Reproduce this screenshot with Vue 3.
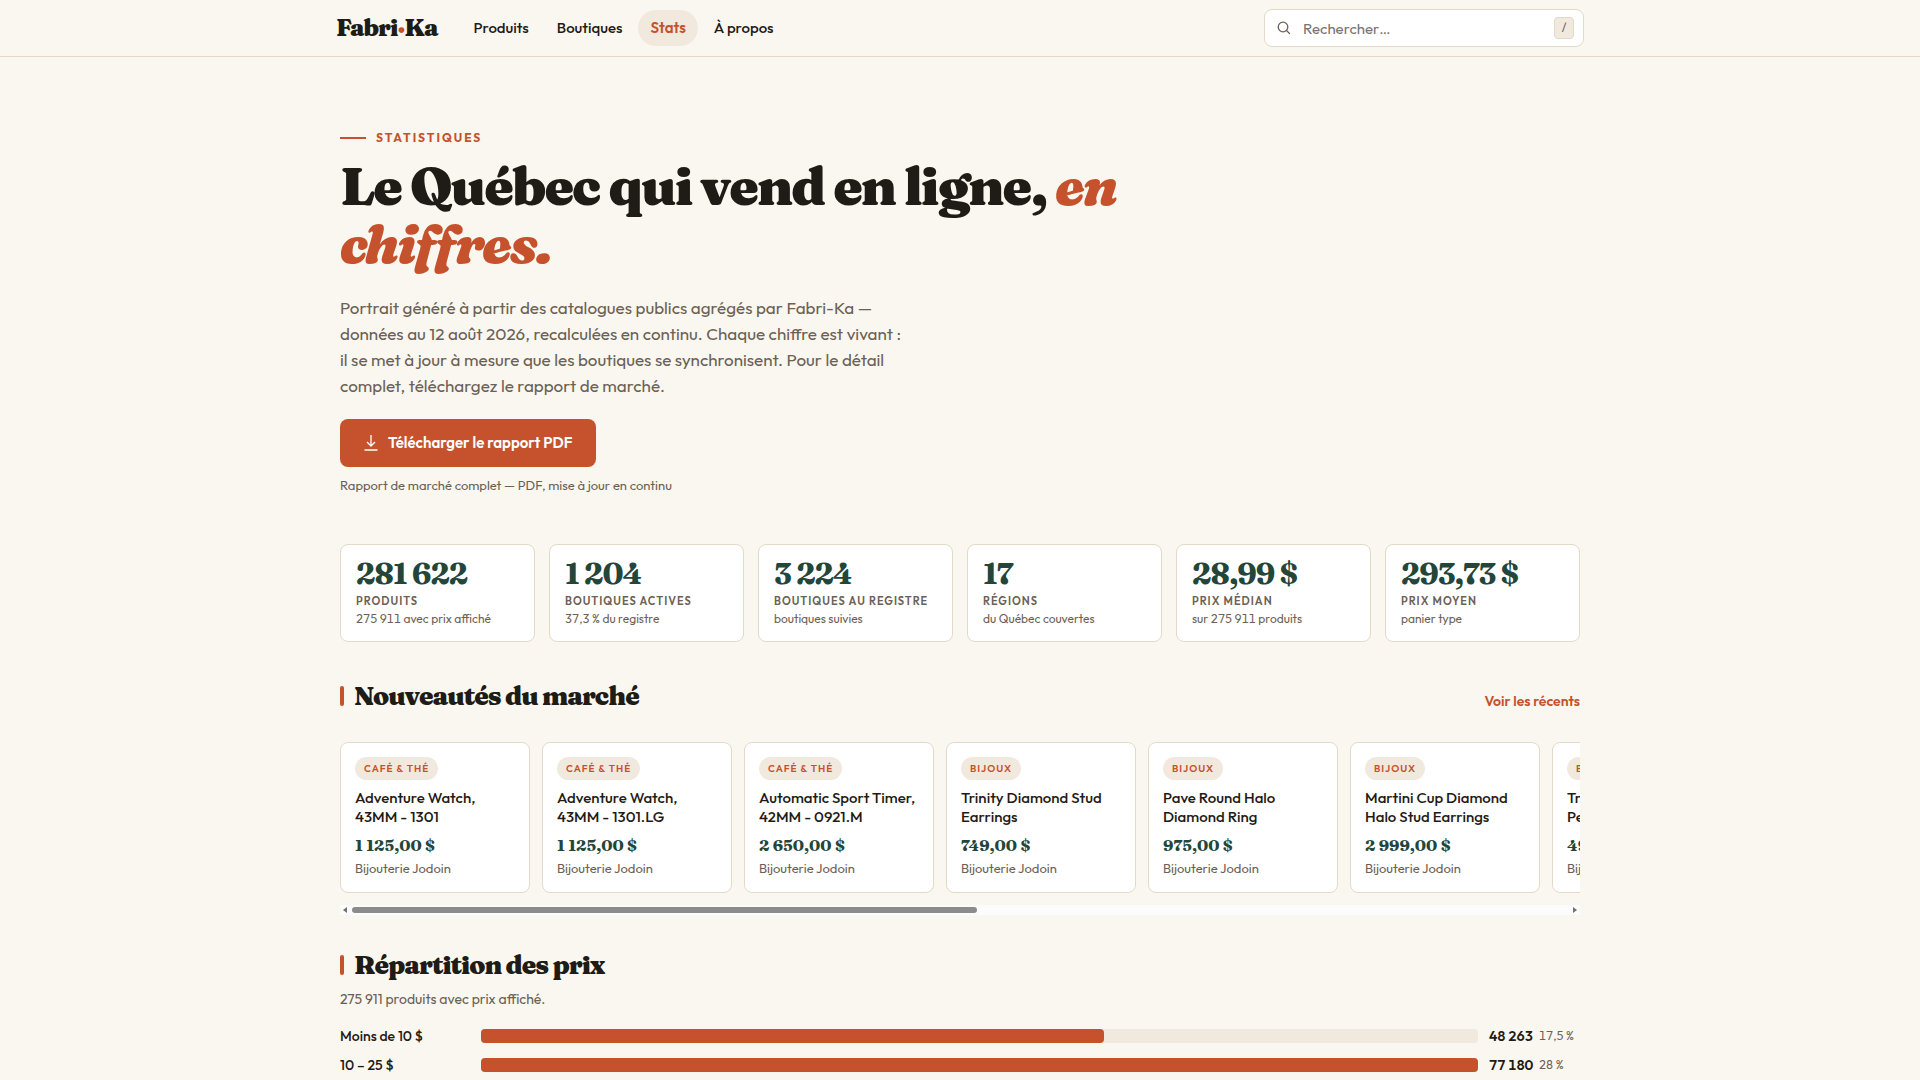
<script setup>
import { ref } from 'vue'

const query = ref('')

const links = [
  { label: 'Produits', active: false },
  { label: 'Boutiques', active: false },
  { label: 'Stats', active: true },
  { label: 'À propos', active: false },
]

const stats = [
  { value: '281 622', label: 'Produits', note: '275 911 avec prix affiché' },
  { value: '1 204', label: 'Boutiques actives', note: '37,3 % du registre' },
  { value: '3 224', label: 'Boutiques au registre', note: 'boutiques suivies' },
  { value: '17', label: 'Régions', note: 'du Québec couvertes' },
  { value: '28,99 $', label: 'Prix médian', note: 'sur 275 911 produits' },
  { value: '293,73 $', label: 'Prix moyen', note: 'panier type' },
]

const shop = 'Bijouterie Jodoin'
const products = [
  { tag: 'Café & thé', name: 'Adventure Watch, 43MM - 1301', price: '1 125,00 $' },
  { tag: 'Café & thé', name: 'Adventure Watch, 43MM - 1301.LG', price: '1 125,00 $' },
  { tag: 'Café & thé', name: 'Automatic Sport Timer, 42MM - 0921.M', price: '2 650,00 $' },
  { tag: 'Bijoux', name: 'Trinity Diamond Stud Earrings', price: '749,00 $' },
  { tag: 'Bijoux', name: 'Pave Round Halo Diamond Ring', price: '975,00 $' },
  { tag: 'Bijoux', name: 'Martini Cup Diamond Halo Stud Earrings', price: '2 999,00 $' },
  { tag: 'Bijoux', name: 'Trinity Diamond Pendant Necklace', price: '499,00 $' },
]

const prices = [
  { label: 'Moins de 10 $', count: 48263, text: '48 263', share: '17,5 %' },
  { label: '10 – 25 $', count: 77180, text: '77 180', share: '28 %' },
]
const most = Math.max(...prices.map((p) => p.count))
</script>

<template>
  <div class="page">
    <header class="topbar">
      <div class="topbar-inner">
        <a class="logo" href="#">Fabri<span class="dot">·</span>Ka</a>
        <nav class="nav" aria-label="Principale">
          <a v-for="l in links" :key="l.label" href="#" :class="{ active: l.active }">{{ l.label }}</a>
        </nav>
        <label class="search">
          <svg width="14" height="14" viewBox="0 0 14 14" fill="none" stroke="currentColor" stroke-width="1.3" stroke-linecap="round" aria-hidden="true">
            <circle cx="6" cy="6" r="4.8" />
            <path d="M9.5 9.5 12.5 12.5" />
          </svg>
          <input v-model="query" type="search" placeholder="Rechercher…" aria-label="Rechercher" />
          <kbd>/</kbd>
        </label>
      </div>
    </header>

    <main class="main">
      <section class="hero">
        <p class="eyebrow">Statistiques</p>
        <h1>Le Québec qui vend en ligne, <em>en chiffres.</em></h1>
        <p class="lead">
          Portrait généré à partir des catalogues publics agrégés par Fabri-Ka —
          données au 12 août 2026, recalculées en continu. Chaque chiffre est vivant&nbsp;:
          il se met à jour à mesure que les boutiques se synchronisent. Pour le détail
          complet, téléchargez le rapport de marché.
        </p>
        <a class="download" href="#">
          <svg width="14" height="16" viewBox="0 0 14 16" fill="none" stroke="currentColor" stroke-width="1.3" aria-hidden="true">
            <path d="M7 0v11M3 7l4 4 4-4M0.5 15h13" />
          </svg>
          Télécharger le rapport PDF
        </a>
        <p class="note">Rapport de marché complet — PDF, mise à jour en continu</p>
      </section>

      <section class="stats" aria-label="Chiffres clés">
        <div v-for="s in stats" :key="s.label" class="stat">
          <strong>{{ s.value }}</strong>
          <span class="stat-label">{{ s.label }}</span>
          <span class="stat-note">{{ s.note }}</span>
        </div>
      </section>

      <section class="news">
        <div class="section-head">
          <h2>Nouveautés du marché</h2>
          <a href="#">Voir les récents</a>
        </div>
        <div class="scroller">
          <a v-for="p in products" :key="p.name" class="card" href="#">
            <span class="tag">{{ p.tag }}</span>
            <span class="name">{{ p.name }}</span>
            <span class="price">{{ p.price }}</span>
            <span class="shop">{{ shop }}</span>
          </a>
        </div>
        <div class="scrollbar" aria-hidden="true">
          <svg width="4" height="6" viewBox="0 0 4 6"><path d="M4 0v6L0 3z" fill="currentColor" /></svg>
          <div class="rail"><div class="thumb"></div></div>
          <svg width="4" height="6" viewBox="0 0 4 6"><path d="M0 0v6l4-3z" fill="currentColor" /></svg>
        </div>
      </section>

      <section class="spread">
        <h2>Répartition des prix</h2>
        <p class="sub">275 911 produits avec prix affiché.</p>
        <div class="rows">
          <div v-for="p in prices" :key="p.label" class="row">
            <span class="row-label">{{ p.label }}</span>
            <div class="track"><div class="fill" :style="{ width: (p.count / most) * 100 + '%' }"></div></div>
            <span class="row-value"><b>{{ p.text }}</b><span>{{ p.share }}</span></span>
          </div>
        </div>
      </section>
    </main>
  </div>
</template>

<style>
body {
  margin: 0;
  background: #faf7f0;
}
</style>

<style scoped>
.page {
  --ink: #1f1b16;
  --muted: #6b6154;
  --accent: #c5522d;
  --green: #24453a;
  --line: #e4d9c7;
  --sand: #f1e9de;
  --serif: Fraunces, "Liberation Serif", serif;
  color: var(--ink);
  font-family: Outfit, Lato, sans-serif;
  font-size: 15px;
}
*,
*::before,
*::after {
  box-sizing: border-box;
}
p,
h1,
h2 {
  margin: 0;
}
a {
  color: inherit;
  text-decoration: none;
}

.topbar {
  border-bottom: 1px solid var(--line);
}
.topbar-inner {
  display: flex;
  align-items: center;
  max-width: 1248px;
  height: 56px;
  margin: 0 auto;
}
.logo {
  font: 900 24px/32px var(--serif);
  letter-spacing: -1px;
}
.dot {
  color: var(--accent);
}
.nav {
  display: flex;
  gap: 4px;
  margin-left: 24px;
  font-weight: 500;
}
.nav a {
  padding: 0 12px;
  border-radius: 18px;
  line-height: 36px;
}
.nav .active {
  background: var(--sand);
  color: var(--accent);
  font-weight: 600;
}
.search {
  display: flex;
  align-items: center;
  width: 320px;
  height: 38px;
  margin-left: auto;
  padding: 0 9px 0 12px;
  border: 1px solid var(--line);
  border-radius: 8px;
  background: #fff;
  color: var(--muted);
}
.search input {
  flex: 1;
  min-width: 0;
  margin-left: 12px;
  padding: 0;
  border: 0;
  outline: 0;
  background: none;
  color: var(--ink);
  font: inherit;
}
.search input::placeholder {
  color: #757575;
}
kbd {
  width: 20px;
  border: 1px solid var(--line);
  border-radius: 4px;
  background: var(--sand);
  font: 12px/20px Outfit, Lato, sans-serif;
  text-align: center;
}

.main {
  max-width: 1240px;
  margin: 0 auto;
  padding: 72px 0 4px;
}
.hero {
  display: flex;
  flex-direction: column;
  align-items: flex-start;
}
.eyebrow {
  display: flex;
  align-items: center;
  gap: 10px;
  color: var(--accent);
  font-size: 12px;
  font-weight: 700;
  line-height: 18px;
  letter-spacing: 2px;
  text-transform: uppercase;
}
.eyebrow::before {
  width: 26px;
  height: 2px;
  background: currentColor;
  content: "";
}
h1 {
  max-width: 820px;
  margin-top: 10px;
  font: 900 53px/58px var(--serif);
  letter-spacing: -2px;
}
h1 em {
  color: var(--accent);
}
.lead {
  max-width: 570px;
  margin-top: 22px;
  color: var(--muted);
  font-size: 17px;
  line-height: 26px;
}
.download {
  display: flex;
  align-items: center;
  gap: 10px;
  height: 48px;
  margin-top: 20px;
  padding: 0 24px;
  border-radius: 8px;
  background: var(--accent);
  color: #fff;
  font-weight: 600;
  line-height: 20px;
}
.note {
  margin-top: 8px;
  color: var(--muted);
  font-size: 13px;
  line-height: 20px;
}

.stats {
  display: grid;
  grid-template-columns: repeat(6, 1fr);
  gap: 14px;
  margin-top: 49px;
}
.stat {
  display: flex;
  flex-direction: column;
  padding: 13px 15px 14px;
  border: 1px solid var(--line);
  border-radius: 8px;
  background: #fff;
  color: var(--muted);
}
.stat strong {
  color: var(--green);
  font: 700 30px/32px var(--serif);
  letter-spacing: -1px;
}
.stat-label {
  margin-top: 4px;
  font-size: 11px;
  font-weight: 600;
  line-height: 14px;
  letter-spacing: 1px;
  text-transform: uppercase;
}
.stat-note {
  margin-top: 3px;
  font-size: 12px;
  font-variant-numeric: tabular-nums;
  line-height: 16px;
}

h2 {
  display: flex;
  align-items: center;
  gap: 10px;
  font: 900 26px/34px var(--serif);
  letter-spacing: -1px;
}
h2::before {
  width: 4px;
  height: 20px;
  border-radius: 2px;
  background: var(--accent);
  content: "";
}
.news {
  margin-top: 37px;
}
.section-head {
  display: flex;
  align-items: baseline;
  justify-content: space-between;
}
.section-head a {
  color: var(--accent);
  font-size: 14px;
  font-weight: 600;
}
.scroller {
  display: flex;
  gap: 12px;
  margin-top: 29px;
  padding-bottom: 12px;
  overflow-x: auto;
  scrollbar-width: none;
}
.scrollbar {
  display: flex;
  align-items: center;
  gap: 5px;
  padding: 0 3px;
  background: #fcfcfc;
  color: #707070;
}
.rail {
  flex: 1;
  padding: 2px 0;
}
.thumb {
  width: 51.4%;
  height: 6px;
  border-radius: 3px;
  background: #8b8b8b;
}
.card {
  display: flex;
  flex: 0 0 190px;
  flex-direction: column;
  align-items: flex-start;
  padding: 14px 14px 15px;
  border: 1px solid var(--line);
  border-radius: 8px;
  background: #fff;
}
.tag {
  padding: 0 9px;
  border-radius: 12px;
  background: var(--sand);
  color: var(--accent);
  font-size: 10px;
  font-weight: 600;
  line-height: 23px;
  letter-spacing: 1px;
  text-transform: uppercase;
}
.name {
  margin-top: 8px;
  font-size: 15px;
  font-weight: 500;
  line-height: 19px;
}
.price {
  margin-top: 9px;
  color: var(--green);
  font: 700 16px/20px var(--serif);
}
.shop {
  margin-top: 4px;
  color: var(--muted);
  font-size: 13px;
  line-height: 18px;
}

.spread {
  margin-top: 33px;
}
.sub {
  margin-top: 7px;
  color: var(--muted);
  font-size: 14px;
  line-height: 20px;
}
.rows {
  display: grid;
  gap: 9px;
  margin-top: 17px;
}
.row {
  display: grid;
  grid-template-columns: 130px 1fr 91px;
  gap: 11px;
  align-items: center;
  font-size: 14px;
  line-height: 20px;
}
.row-label {
  font-weight: 500;
}
.track {
  height: 14px;
  border-radius: 4px;
  background: var(--sand);
}
.fill {
  height: 100%;
  border-radius: 4px;
  background: var(--accent);
}
.row-value {
  display: flex;
  gap: 6px;
  font-variant-numeric: tabular-nums;
}
.row-value b {
  font-weight: 600;
}
.row-value span {
  color: var(--muted);
  font-size: 12px;
}
</style>
